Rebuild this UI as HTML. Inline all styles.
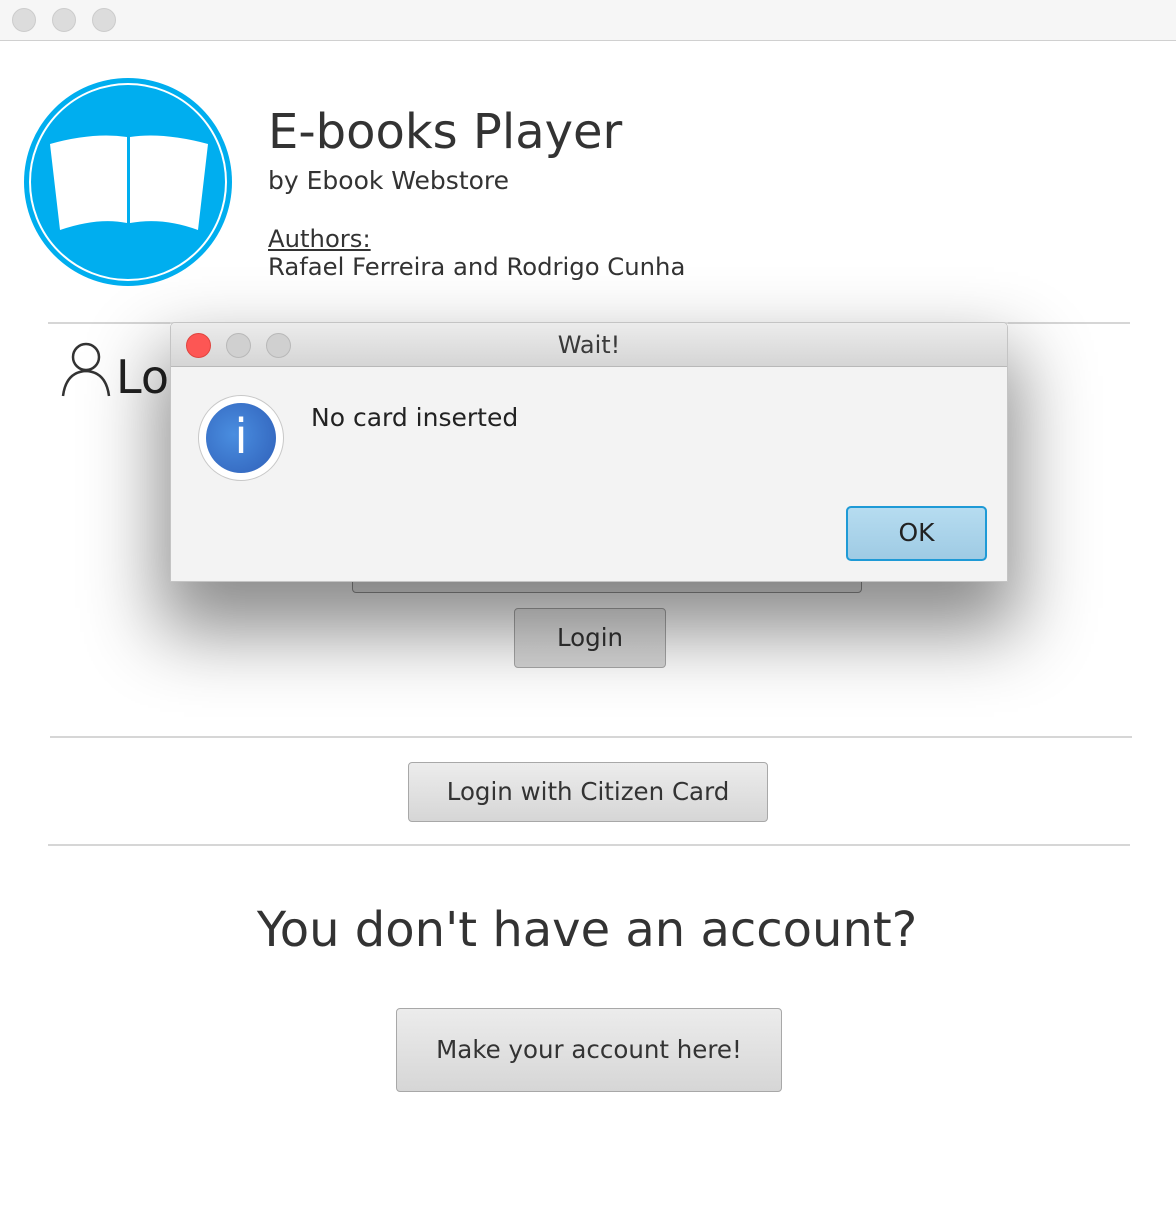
<!DOCTYPE html>
<html><head><style>
*{margin:0;padding:0;box-sizing:border-box}
body{width:1176px;height:1228px;background:#fff;position:relative;overflow:hidden;font-family:"DejaVu Sans","Liberation Sans",sans-serif;color:#333}
.abs{position:absolute}
.tl{width:24px;height:24px;border-radius:50%;background:#dcdcdc;border:1px solid #ccc;top:8px}
.hr{position:absolute;height:2px;background:#d6d6d6}
.btn{position:absolute;border:1px solid #a8a8a8;border-radius:4px;background:linear-gradient(#ececec,#d6d6d6);text-align:center;color:#333}
</style></head><body>
<div class="abs" style="left:0;top:0;width:1176px;height:41px;background:#f6f6f6;border-bottom:1px solid #d0d0d0"></div>
<div class="abs tl" style="left:12px"></div>
<div class="abs tl" style="left:52px"></div>
<div class="abs tl" style="left:92px"></div>

<svg class="abs" style="left:23px;top:77px" width="210" height="210" viewBox="0 0 210 210">
<circle cx="105" cy="105" r="104" fill="#00aeef"/>
<circle cx="105" cy="105" r="98" fill="none" stroke="#fff" stroke-width="2"/>
<path d="M27 67 Q70 55 104 60 L104 146 Q75 140 37 153 Z" fill="#fff"/>
<path d="M107 60 Q140 55 185 67 L175 153 Q140 140 107 146 Z" fill="#fff"/>
</svg>
<div class="abs" style="left:268px;top:104px;font-size:48px">E-books Player</div>
<div class="abs" style="left:268px;top:166px;font-size:25px">by Ebook Webstore</div>
<div class="abs" style="left:268px;top:224px;font-size:24.3px;text-decoration:underline">Authors:</div>
<div class="abs" style="left:268px;top:252px;font-size:24.3px">Rafael Ferreira and Rodrigo Cunha</div>

<div class="hr" style="left:48px;top:322px;width:1082px"></div>
<svg class="abs" style="left:60px;top:340px" width="52" height="58" viewBox="0 0 52 58"><circle cx="26" cy="17" r="13" fill="none" stroke="#333" stroke-width="2.5"/><path d="M3 56 Q6 32 26 31 Q46 32 49 56" fill="none" stroke="#333" stroke-width="2.5"/></svg>
<div class="abs" style="left:116px;top:350px;font-size:46px;color:#222">Login</div>

<div class="abs" style="left:352px;top:560px;width:510px;height:33px;border:1px solid #999;border-radius:4px;background:#eee"></div>
<div class="btn" style="left:514px;top:608px;width:152px;height:60px;font-size:24.5px;line-height:58px">Login</div>

<div class="abs" style="left:170px;top:322px;width:838px;height:260px;box-shadow:0 40px 70px 10px rgba(0,0,0,0.45)"></div>

<div class="hr" style="left:50px;top:736px;width:1082px"></div>
<div class="btn" style="left:408px;top:762px;width:360px;height:60px;font-size:24.5px;line-height:58px">Login with Citizen Card</div>
<div class="hr" style="left:48px;top:844px;width:1082px"></div>
<div class="abs" style="left:0;top:902px;width:1176px;text-align:center;font-size:48px;padding-right:2px">You don't have an account?</div>
<div class="btn" style="left:396px;top:1008px;width:386px;height:84px;font-size:24.5px;line-height:82px">Make your account here!</div>

<div class="abs" style="left:170px;top:322px;width:838px;height:260px;background:#f3f3f3;border-radius:5px 5px 0 0;overflow:hidden;border:1px solid #c4c4c4">
 <div style="height:44px;background:linear-gradient(#ececec,#d5d5d5);border-bottom:1px solid #b8b8b8;text-align:center;font-size:24px;line-height:44px;color:#3a3a3a">Wait!</div>
 <div class="abs" style="left:15px;top:10px;width:25px;height:25px;border-radius:50%;background:#fd5654;border:1px solid #e0443e"></div>
 <div class="abs" style="left:55px;top:10px;width:25px;height:25px;border-radius:50%;background:#d0d0d0;border:1px solid #b8b8b8"></div>
 <div class="abs" style="left:95px;top:10px;width:25px;height:25px;border-radius:50%;background:#d0d0d0;border:1px solid #b8b8b8"></div>
 <div class="abs" style="left:27px;top:72px;width:86px;height:86px;border-radius:50%;background:#fff;border:1px solid #c8c8c8"></div>
 <div class="abs" style="left:35px;top:80px;width:70px;height:70px;border-radius:50%;background:radial-gradient(circle at 40% 45%,#4a8ee0,#2f5fb8);color:#fff;font-size:48px;text-align:center;line-height:68px">i</div>
 <div class="abs" style="left:140px;top:80px;font-size:25px;color:#222">No card inserted</div>
 <div class="abs" style="left:675px;top:183px;width:141px;height:55px;border:2px solid #1e9ad6;border-radius:5px;background:linear-gradient(#b6dcf0,#9fcbe4);text-align:center;font-size:25px;line-height:50px;color:#222">OK</div>
</div>
</body></html>
